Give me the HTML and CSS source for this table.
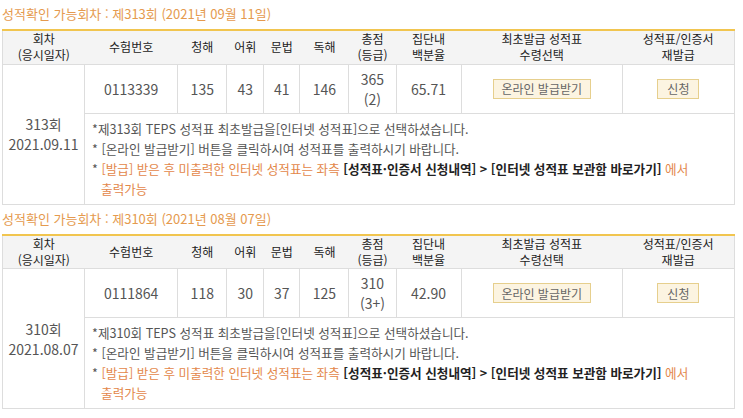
FILE: index.html
```html
<!DOCTYPE html>
<html lang="ko">
<head>
<meta charset="utf-8">
<link rel="stylesheet" href="styles.css">
</head>
<body>
<section class="round">
  <h2 class="round-title">성적확인 가능회차 : 제313회 (2021년 09월 11일)</h2>
  <table class="score-table">
    <colgroup>
      <col class="c-round"><col class="c-no"><col class="c-l"><col class="c-v"><col class="c-g"><col class="c-r"><col class="c-t"><col class="c-p"><col class="c-first"><col class="c-re">
    </colgroup>
    <thead>
      <tr>
        <th>회차<br>(응시일자)</th>
        <th>수험번호</th>
        <th>청해</th>
        <th>어휘</th>
        <th>문법</th>
        <th>독해</th>
        <th>총점<br>(등급)</th>
        <th>집단내<br>백분율</th>
        <th>최초발급 성적표<br>수령선택</th>
        <th>성적표/인증서<br>재발급</th>
      </tr>
    </thead>
    <tbody>
      <tr class="data-row">
        <td class="round-cell" rowspan="2">313회<br>2021.09.11</td>
        <td>0113339</td>
        <td>135</td>
        <td>43</td>
        <td>41</td>
        <td>146</td>
        <td class="total">365<br>(2)</td>
        <td>65.71</td>
        <td><button class="btn btn-online">온라인 발급받기</button></td>
        <td><button class="btn btn-apply">신청</button></td>
      </tr>
      <tr class="note-row">
        <td class="notes" colspan="9">
          <p class="note">*제313회 TEPS 성적표 최초발급을[인터넷 성적표]으로 선택하셨습니다.</p>
          <p class="note">* [온라인 발급받기] 버튼을 클릭하시여 성적표를 출력하시기 바랍니다.</p>
          <p class="note">* <span class="warn">[발급] 받은 후 미출력한 인터넷 성적표는 좌측</span> <strong>[성적표·인증서 신청내역] &gt; [인터넷 성적표 보관함 바로가기]</strong> <span class="warn">에서<br>출력가능</span></p>
        </td>
      </tr>
    </tbody>
  </table>
</section>
<section class="round">
  <h2 class="round-title">성적확인 가능회차 : 제310회 (2021년 08월 07일)</h2>
  <table class="score-table">
    <colgroup>
      <col class="c-round"><col class="c-no"><col class="c-l"><col class="c-v"><col class="c-g"><col class="c-r"><col class="c-t"><col class="c-p"><col class="c-first"><col class="c-re">
    </colgroup>
    <thead>
      <tr>
        <th>회차<br>(응시일자)</th>
        <th>수험번호</th>
        <th>청해</th>
        <th>어휘</th>
        <th>문법</th>
        <th>독해</th>
        <th>총점<br>(등급)</th>
        <th>집단내<br>백분율</th>
        <th>최초발급 성적표<br>수령선택</th>
        <th>성적표/인증서<br>재발급</th>
      </tr>
    </thead>
    <tbody>
      <tr class="data-row">
        <td class="round-cell" rowspan="2">310회<br>2021.08.07</td>
        <td>0111864</td>
        <td>118</td>
        <td>30</td>
        <td>37</td>
        <td>125</td>
        <td class="total">310<br>(3+)</td>
        <td>42.90</td>
        <td><button class="btn btn-online">온라인 발급받기</button></td>
        <td><button class="btn btn-apply">신청</button></td>
      </tr>
      <tr class="note-row">
        <td class="notes" colspan="9">
          <p class="note">*제310회 TEPS 성적표 최초발급을[인터넷 성적표]으로 선택하셨습니다.</p>
          <p class="note">* [온라인 발급받기] 버튼을 클릭하시여 성적표를 출력하시기 바랍니다.</p>
          <p class="note">* <span class="warn">[발급] 받은 후 미출력한 인터넷 성적표는 좌측</span> <strong>[성적표·인증서 신청내역] &gt; [인터넷 성적표 보관함 바로가기]</strong> <span class="warn">에서<br>출력가능</span></p>
        </td>
      </tr>
    </tbody>
  </table>
</section>
</body>
</html>
```

FILE: styles.css
```css
* { box-sizing: border-box; }

body {
  margin: 0;
  padding: 0 0 0 2px;
  background: #fff;
  font-family: "Noto Sans CJK KR", "Noto Sans", sans-serif;
  color: #555;
}

.round-title {
  margin: 0;
  height: 29px;
  line-height: 28px;
  font-size: 13px;
  font-weight: normal;
  color: #e59a4e;
}

.score-table {
  width: 733px;
  table-layout: fixed;
  border-collapse: collapse;
  border-top: 2px solid #f1c54f;
  border-left: 1px solid #ddd;
  border-right: 1px solid #ddd;
  border-bottom: 1px solid #ddd;
}

.c-round { width: 82px; }
.c-no { width: 93px; }
.c-l { width: 49px; }
.c-v { width: 37px; }
.c-g { width: 36px; }
.c-r { width: 49px; }
.c-t { width: 47px; }
.c-p { width: 65px; }
.c-first { width: 161px; }
.c-re { width: 112px; }

.score-table th {
  height: 34px;
  padding: 0;
  background: #f4f4f4;
  border-bottom: 1px solid #ddd;
  font-size: 12px;
  font-weight: normal;
  line-height: 16px;
  color: #222;
  text-align: center;
  vertical-align: middle;
}

.score-table td {
  padding: 0;
  border: 1px solid #ddd;
  text-align: center;
  vertical-align: middle;
  font-size: 14px;
  color: #555;
}

.data-row td {
  height: 49px;
  line-height: 20px;
}

.round-cell {
  line-height: 18px;
}

.btn {
  font-family: "Noto Sans CJK KR", "Noto Sans", sans-serif;
  font-size: 12px;
  color: #666;
  background: #fcf4e1;
  border: 1px solid #e6cf8d;
  height: 20px;
  padding: 0;
  line-height: 17px;
  cursor: pointer;
}

.btn-online { width: 98px; }
.btn-apply { width: 42px; }

.score-table td.notes {
  height: 90px;
  padding: 5px 8px 5px 7px;
  text-align: left;
  font-size: 12.6px;
  line-height: 20px;
  color: #555;
}

.note {
  margin: 0;
  padding-left: 9px;
  text-indent: -9px;
}

.warn { color: #e3874a; }

.note strong {
  color: #222;
  font-weight: bold;
}
```
